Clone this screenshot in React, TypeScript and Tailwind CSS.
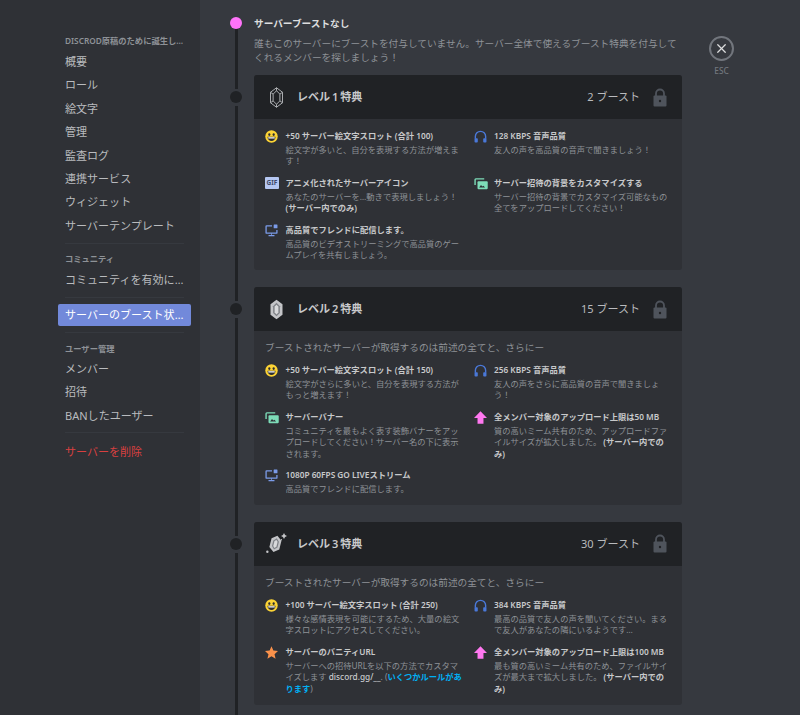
import type { ReactNode } from "react";
import { X } from "lucide-react";

function Smile() {
  return (
    <svg viewBox="0 0 24 24" className="h-[13px] w-[13px]">
      <circle cx="12" cy="12" r="11.5" fill="#fcd335" />
      <ellipse cx="8" cy="8.5" rx="2" ry="2.6" fill="#2b2c30" />
      <ellipse cx="16" cy="8.5" rx="2" ry="2.6" fill="#2b2c30" />
      <path d="M4.5 12.5h15c0 4.6-3.4 8-7.5 8s-7.5-3.4-7.5-8z" fill="#2b2c30" />
      <path d="M6 13.5h12v2H6z" fill="#fff" />
    </svg>
  );
}

function Headphones() {
  return (
    <svg viewBox="0 0 24 24" className="h-[13px] w-[13px]">
      <path d="M2.5 16v-4a9.5 9.5 0 0 1 19 0v4" fill="none" stroke="#4a78d8" strokeWidth="2.6" />
      <rect x="1" y="15" width="6" height="8" rx="1.5" fill="#4a78d8" />
      <rect x="17" y="15" width="6" height="8" rx="1.5" fill="#4a78d8" />
    </svg>
  );
}

function Gif() {
  return (
    <span className="flex h-[12px] w-[14px] items-center justify-center rounded-[1px] bg-[#b5c7f2] text-[6.5px] font-bold leading-none text-[#3f4a6b]">
      GIF
    </span>
  );
}

function Screen() {
  return (
    <svg viewBox="0 0 24 24" className="h-[13px] w-[13px]">
      <path d="M13 3.5H3a1 1 0 0 0-1 1V16a1 1 0 0 0 1 1h18a1 1 0 0 0 1-1v-5" fill="none" stroke="#7b9be8" strokeWidth="2.4" />
      <rect x="16" y="1" width="7" height="7" rx="1" fill="#7b9be8" />
      <path d="M11 17h2v3h-2zM6.5 20.5h11v2h-11z" fill="#7b9be8" />
    </svg>
  );
}

function Images() {
  return (
    <svg viewBox="0 0 26 24" className="h-[13px] w-[14px]">
      <path d="M2 15V5a1.5 1.5 0 0 1 1.5-1.5H19" fill="none" stroke="#7ddcb8" strokeWidth="2.6" />
      <rect x="6.5" y="8" width="19" height="14.5" rx="1.5" fill="#7ddcb8" />
      <path d="M9.5 19.5l3.5-4.5 2.5 2.5 2-1.5 3 3.5z" fill="#2f3136" />
    </svg>
  );
}

function Upload() {
  return (
    <svg viewBox="0 0 24 24" className="h-[13px] w-[13px]">
      <path d="M12 0.5L24 13h-6.5v10.5h-11V13H0z" fill="#ff78f0" />
    </svg>
  );
}

function Star() {
  return (
    <svg viewBox="0 0 24 24" className="h-[13px] w-[13px]">
      <path d="M12 0.5l3.5 8 8.5.8-6.4 5.7 1.9 8.5-7.5-4.5-7.5 4.5 1.9-8.5L0 9.3l8.5-.8z" fill="#f9914b" />
    </svg>
  );
}

function Lock() {
  return (
    <svg viewBox="0 0 14 19" className="h-[19px] w-[14px]">
      <path d="M3 9V5.5a4 4 0 0 1 8 0V9" fill="none" stroke="#4f545c" strokeWidth="1.8" />
      <rect x="0.5" y="7.5" width="13" height="11" rx="1" fill="#4f545c" />
      <circle cx="7" cy="13" r="1.2" fill="#202225" />
    </svg>
  );
}

function Gem({ level }: { level: number }) {
  if (level === 1) {
    return (
      <svg viewBox="0 0 20 28" className="h-[21px] w-[15px]" fill="none" stroke="#b9bbbe" strokeWidth="1.2">
        <path d="M10 1l8 6v14l-8 6-8-6V7z" />
        <path d="M10 5l4.5 4.5v9L10 23l-4.5-4.5v-9z" />
        <path d="M10 1v4M18 7l-3.5 2.5M2 7l3.5 2.5M18 21l-3.5-2.5M2 21l3.5-2.5M10 27v-4" />
      </svg>
    );
  }
  return (
    <svg viewBox="0 0 28 28" className="h-[21px] w-[21px]">
      <g transform={level === 3 ? "rotate(14 14 15) translate(4 3) scale(0.85)" : "translate(4 0)"}>
        <path d="M10 1l8 6v14l-8 6-8-6V7z" fill="#c4c5c8" />
        <path d="M10 5l4.5 4.5v9L10 23l-4.5-4.5v-9z" fill="#7f8287" />
        <path d="M10 7.5l2.5 2.5v8L10 20.5 7.5 18v-8z" fill="#d8d9db" />
      </g>
      {level === 3 && (
        <g fill="#c4c5c8">
          <path d="M24 0l1.4 2.6L28 4l-2.6 1.4L24 8l-1.4-2.6L20 4l2.6-1.4z" />
          <circle cx="1.8" cy="25" r="1.6" />
          <circle cx="20.5" cy="9" r="0.9" />
        </g>
      )}
    </svg>
  );
}

const Only = () => <span className="font-semibold text-[#c8c9cb]">(サーバー内でのみ)</span>;

type Perk = { icon: ReactNode; title: string; desc: ReactNode };

const levels: { level: number; title: string; boosts: string; intro: boolean; perks: Perk[] }[] = [
  {
    level: 1,
    title: "レベル 1 特典",
    boosts: "2",
    intro: false,
    perks: [
      { icon: <Smile />, title: "+50 サーバー絵文字スロット (合計 100)", desc: "絵文字が多いと、自分を表現する方法が増えます！" },
      { icon: <Headphones />, title: "128 KBPS 音声品質", desc: "友人の声を高品質の音声で聞きましょう！" },
      { icon: <Gif />, title: "アニメ化されたサーバーアイコン", desc: <>あなたのサーバーを…動きで表現しましょう！ <Only /></> },
      { icon: <Images />, title: "サーバー招待の背景をカスタマイズする", desc: "サーバー招待の背景でカスタマイズ可能なもの全てをアップロードしてください！" },
      { icon: <Screen />, title: "高品質でフレンドに配信します。", desc: "高品質のビデオストリーミングで高品質のゲームプレイを共有しましょう。" },
    ],
  },
  {
    level: 2,
    title: "レベル 2 特典",
    boosts: "15",
    intro: true,
    perks: [
      { icon: <Smile />, title: "+50 サーバー絵文字スロット (合計 150)", desc: "絵文字がさらに多いと、自分を表現する方法がもっと増えます！" },
      { icon: <Headphones />, title: "256 KBPS 音声品質", desc: "友人の声をさらに高品質の音声で聞きましょう！" },
      { icon: <Images />, title: "サーバーバナー", desc: "コミュニティを最もよく表す装飾バナーをアップロードしてください！サーバー名の下に表示されます。" },
      { icon: <Upload />, title: "全メンバー対象のアップロード上限は50 MB", desc: <>質の高いミーム共有のため、アップロードファイルサイズが拡大しました。 <Only /></> },
      { icon: <Screen />, title: "1080P 60FPS GO LIVEストリーム", desc: "高品質でフレンドに配信します。" },
    ],
  },
  {
    level: 3,
    title: "レベル 3 特典",
    boosts: "30",
    intro: true,
    perks: [
      { icon: <Smile />, title: "+100 サーバー絵文字スロット (合計 250)", desc: "様々な感情表現を可能にするため、大量の絵文字スロットにアクセスしてください。" },
      { icon: <Headphones />, title: "384 KBPS 音声品質", desc: "最高の品質で友人の声を聞いてください。まるで友人があなたの隣にいるようです…" },
      {
        icon: <Star />,
        title: "サーバーのバニティURL",
        desc: (
          <>
            サーバーへの招待URLを以下の方法でカスタマイズします <span className="font-medium text-[#c8c9cb]">discord.gg/__</span>. (
            <span className="font-semibold text-[#00b0f4]">いくつかルールがあります</span>)
          </>
        ),
      },
      { icon: <Upload />, title: "全メンバー対象のアップロード上限は100 MB", desc: <>最も質の高いミーム共有のため、ファイルサイズが最大まで拡大しました。 <Only /></> },
    ],
  },
];

function SideHeader({ children, className }: { children: ReactNode; className: string }) {
  return <div className={`truncate pl-[7px] pr-[5px] text-[8.28px] font-semibold leading-[12px] text-[#8e9297] ${className}`}>{children}</div>;
}

function SideItem({ children, active, danger }: { children: ReactNode; active?: boolean; danger?: boolean }) {
  const color = active ? "rounded-[2px] bg-[#7289da] text-white" : danger ? "text-[#d84040]" : "text-[#b9bbbe]";
  return <div className={`mb-[1.4px] h-[22px] truncate px-[7px] text-[11.04px] leading-[22px] ${color}`}>{children}</div>;
}

function Divider({ className }: { className: string }) {
  return <div className={`mx-[7px] h-px bg-[#36393f] ${className}`} />;
}

function Sidebar() {
  return (
    <aside className="w-[200px] shrink-0 bg-[#2f3136] pl-[58px] pr-[9.5px] pt-[35px]">
      <SideHeader className="pb-[4px]">DISCROD原稿のために誕生したサーバー</SideHeader>
      {["概要", "ロール", "絵文字", "管理", "監査ログ", "連携サービス", "ウィジェット", "サーバーテンプレート"].map((s) => (
        <SideItem key={s}>{s}</SideItem>
      ))}
      <Divider className="mb-[9px] mt-[6px]" />
      <SideHeader className="pb-[4px]">コミュニティ</SideHeader>
      <SideItem>コミュニティを有効にする</SideItem>
      <Divider className="mb-[6px] mt-[6px]" />
      <SideItem active>サーバーのブースト状況</SideItem>
      <Divider className="mb-[10px] mt-[6px]" />
      <SideHeader className="pb-[3px]">ユーザー管理</SideHeader>
      {["メンバー", "招待", "BANしたユーザー"].map((s) => (
        <SideItem key={s}>{s}</SideItem>
      ))}
      <Divider className="mb-[8px] mt-[5px]" />
      <SideItem danger>サーバーを削除</SideItem>
    </aside>
  );
}

function PerkCell({ perk }: { perk: Perk }) {
  return (
    <div className="flex">
      <div className="w-[20.5px] shrink-0 pt-px">{perk.icon}</div>
      <div className="min-w-0 flex-1">
        <div className="text-[8.28px] font-semibold leading-[14px] text-[#c8c9cb]">{perk.title}</div>
        <div className="mt-px text-[8.28px] leading-[11.4px] text-[#8e9297]">{perk.desc}</div>
      </div>
    </div>
  );
}

function LevelRow({ row }: { row: (typeof levels)[number] }) {
  return (
    <div className="flex">
      <div className="flex w-[12px] shrink-0 flex-col items-center">
        <div className="h-[14px] w-[3px] bg-[#202225]" />
        <div className="mb-[3px] mt-[2px] h-[12px] w-[12px] rounded-full bg-[#202225]" />
        <div className="w-[3px] flex-1 bg-[#202225]" />
      </div>
      <div className="ml-[12px] w-[428px] pb-[17px]">
        <div className="overflow-hidden rounded-[3px] bg-[#2f3136]">
          <div className="flex h-[44px] items-center bg-[#202225] pl-[11px] pr-[15px]">
            <div className="flex w-[22px] justify-center">
              <Gem level={row.level} />
            </div>
            <div className="ml-[10px] flex-1 text-[11.04px] font-semibold text-[#c8c9cb] [word-spacing:-1px]">{row.title}</div>
            <div className="text-[11.04px] text-[#b9bbbe]">{row.boosts} ブースト</div>
            <div className="ml-[13px]">
              <Lock />
            </div>
          </div>
          <div className={`px-[11px] pt-[10px] ${row.intro ? "pb-[10.5px]" : "pb-[9.6px]"}`}>
            {row.intro && (
              <div className="mb-[8px] text-[9.66px] leading-[14px] text-[#8e9297]">
                ブーストされたサーバーが取得するのは前述の全てと、さらにー
              </div>
            )}
            <div className="grid grid-cols-2 gap-x-[11px] gap-y-[9px]">
              {row.perks.map((p) => (
                <PerkCell key={p.title} perk={p} />
              ))}
            </div>
          </div>
        </div>
      </div>
    </div>
  );
}

export default function App() {
  return (
    <div className="flex h-[715px] overflow-hidden bg-[#36393f] font-['Noto_Sans','Noto_Sans_CJK_JP',sans-serif]">
      <Sidebar />
      <main className="flex flex-1 items-start pl-[30px] pt-[17px]">
        <div className="shrink-0">
          <div className="flex">
            <div className="flex w-[12px] shrink-0 flex-col items-center">
              <div className="h-[12px] w-[12px] rounded-full bg-[#ff73fa]" />
              <div className="w-[3px] flex-1 bg-[#202225]" />
            </div>
            <div className="ml-[12px] w-[428px] pb-[10px]">
              <div className="text-[9.66px] font-semibold leading-[13px] text-[#dcddde]">サーバーブーストなし</div>
              <div className="mt-[7px] text-[9.66px] leading-[14px] text-[#8e9297]">
                誰もこのサーバーにブーストを付与していません。サーバー全体で使えるブースト特典を付与してくれるメンバーを探しましょう！
              </div>
            </div>
          </div>
          {levels.map((row) => (
            <LevelRow key={row.level} row={row} />
          ))}
        </div>
        <div className="ml-[27px] mt-[19px] flex flex-col items-center">
          <div className="flex h-[25px] w-[25px] items-center justify-center rounded-full border-2 border-[#72767d]">
            <X className="h-[15px] w-[15px] text-[#dcddde]" strokeWidth={2} />
          </div>
          <div className="mt-[4px] text-[8.28px] font-medium leading-[12px] text-[#72767d]">ESC</div>
        </div>
      </main>
    </div>
  );
}
